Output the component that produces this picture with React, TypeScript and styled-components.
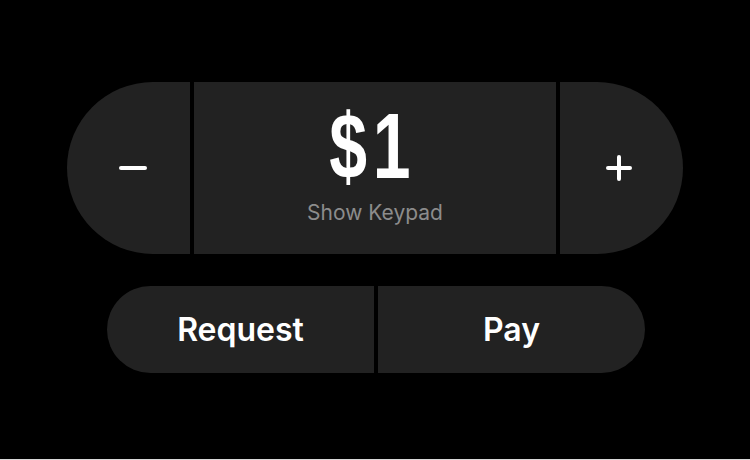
import styled, { createGlobalStyle } from "styled-components";

const GlobalStyle = createGlobalStyle`
  html, body {
    margin: 0;
    padding: 0;
    background: #d9d9d9;
  }
  body {
    font-family: Inter, "Liberation Sans", sans-serif;
  }
`;

const Screen = styled.div`
  width: 750px;
  height: 459px;
  background: #000;
  display: flex;
  flex-direction: column;
  align-items: center;
  padding-top: 82px;
  box-sizing: border-box;
  gap: 32px;
`;

const Stepper = styled.div`
  display: flex;
  gap: 4px;
  height: 172px;
`;

const StepButton = styled.button<{ $side: "left" | "right" }>`
  width: 123px;
  height: 100%;
  border: none;
  background: #222222;
  color: #fff;
  display: flex;
  align-items: center;
  justify-content: center;
  padding: 0;
  ${(p) =>
    p.$side === "left"
      ? "border-radius: 86px 0 0 86px; padding-left: 6px;"
      : "border-radius: 0 86px 86px 0; padding-right: 5px;"}
`;

const Amount = styled.div`
  width: 362px;
  height: 100%;
  background: #222222;
  display: flex;
  flex-direction: column;
  align-items: center;
`;

const Value = styled.div`
  font-family: "Liberation Sans", Arial, sans-serif;
  font-weight: 700;
  font-size: 93px;
  line-height: 1;
  color: #fff;
  margin-top: 18px;
  margin-right: 5px;
  letter-spacing: 8px;
  transform: scaleX(0.73);
`;

const Hint = styled.div`
  font-family: Inter, "Liberation Sans", sans-serif;
  font-size: 21px;
  color: #8c8c8c;
  margin-top: 7px;
`;

const Actions = styled.div`
  display: flex;
  gap: 4px;
  height: 87px;
  margin-left: 2px;
`;

const ActionButton = styled.button<{ $side: "left" | "right" }>`
  width: 267px;
  height: 100%;
  border: none;
  background: #222222;
  color: #fff;
  font-family: Inter, "Liberation Sans", sans-serif;
  font-weight: 600;
  font-size: 32px;
  padding: 0;
  border-radius: ${(p) => (p.$side === "left" ? "44px 0 0 44px" : "0 44px 44px 0")};
`;

export default function App() {
  return (
    <>
      <GlobalStyle />
      <Screen>
        <Stepper>
          <StepButton $side="left" aria-label="Decrease">
            <svg width="30" height="30" viewBox="0 0 30 30">
              <line x1="4" y1="15" x2="28" y2="15" stroke="#fff" strokeWidth="4" strokeLinecap="round" />
            </svg>
          </StepButton>
          <Amount>
            <Value>$1</Value>
            <Hint>Show Keypad</Hint>
          </Amount>
          <StepButton $side="right" aria-label="Increase">
            <svg width="30" height="30" viewBox="0 0 30 30">
              <line x1="4" y1="15" x2="26" y2="15" stroke="#fff" strokeWidth="4" strokeLinecap="round" />
              <line x1="15" y1="4" x2="15" y2="26" stroke="#fff" strokeWidth="4" strokeLinecap="round" />
            </svg>
          </StepButton>
        </Stepper>
        <Actions>
          <ActionButton $side="left">Request</ActionButton>
          <ActionButton $side="right">Pay</ActionButton>
        </Actions>
      </Screen>
    </>
  );
}
